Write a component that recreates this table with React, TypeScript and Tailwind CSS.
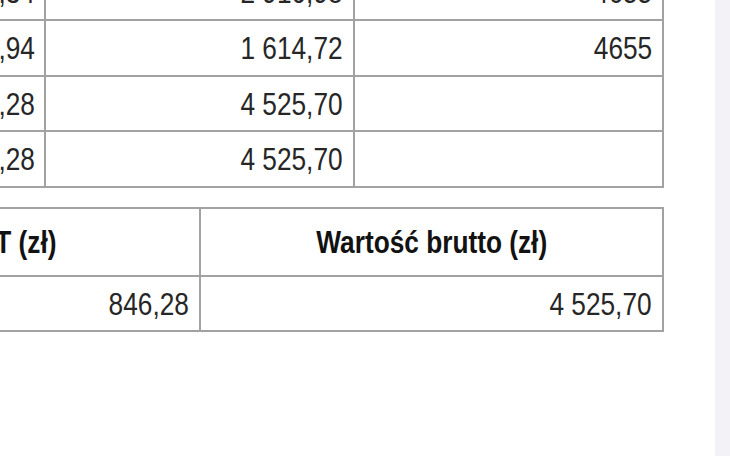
const line = 'border-[#a2a2a2]';

const topRows = [
  { h: 'h-[56px]', vat: '544,34', gross: '2 910,98', code: '4655' },
  { h: 'h-[56px]', vat: '301,94', gross: '1 614,72', code: '4655' },
  { h: 'h-[55px]', vat: '846,28', gross: '4 525,70', code: '' },
  { h: 'h-[56px]', vat: '846,28', gross: '4 525,70', code: '' },
];

function Num({ children }: { children: React.ReactNode }) {
  return (
    <span className="inline-block origin-right scale-x-[0.82] whitespace-nowrap text-[32px] leading-none text-[#262626]">
      {children}
    </span>
  );
}

function Head({ children }: { children: React.ReactNode }) {
  return (
    <span className="inline-block origin-center scale-x-[0.82] whitespace-nowrap text-[32px] font-bold leading-none text-[#121212]">
      {children}
    </span>
  );
}

export default function App() {
  return (
    <div className="flex h-[456px] w-[730px] overflow-hidden bg-white font-['Liberation_Sans',Arial,sans-serif]">
      <main className="relative w-[715px] shrink-0 overflow-hidden">
        {/* Rows table */}
        <div className={`-mt-[35px] -ml-[75px] w-[739px] border-r-2 ${line}`}>
          {topRows.map((r, i) => (
            <div key={i} className={`flex border-b-2 ${line} ${r.h}`}>
              <div className={`flex w-[121px] items-center justify-end border-r-2 pr-[9px] ${line}`}>
                <Num>{r.vat}</Num>
              </div>
              <div className={`flex w-[309px] items-center justify-end border-r-2 pr-[10px] ${line}`}>
                <Num>{r.gross}</Num>
              </div>
              <div className="flex w-[307px] items-center justify-end pr-[10px]">
                <Num>{r.code}</Num>
              </div>
            </div>
          ))}
        </div>

        {/* Summary table */}
        <div className={`mt-[19px] -ml-[266px] w-[930px] border-2 border-l-0 ${line}`}>
          <div className={`flex h-[68px] border-b-2 ${line}`}>
            <div className={`flex w-[467px] items-center justify-center border-r-2 ${line}`}>
              <Head>Kwota VAT (zł)</Head>
            </div>
            <div className="flex flex-1 items-center justify-center">
              <Head>Wartość brutto (zł)</Head>
            </div>
          </div>
          <div className="flex h-[53px]">
            <div className={`flex w-[467px] items-center justify-end border-r-2 pr-[10px] ${line}`}>
              <Num>846,28</Num>
            </div>
            <div className="flex flex-1 items-center justify-end pr-[10px]">
              <Num>4 525,70</Num>
            </div>
          </div>
        </div>
      </main>
      <aside className="flex-1 bg-[#f2f2f7]" />
    </div>
  );
}
